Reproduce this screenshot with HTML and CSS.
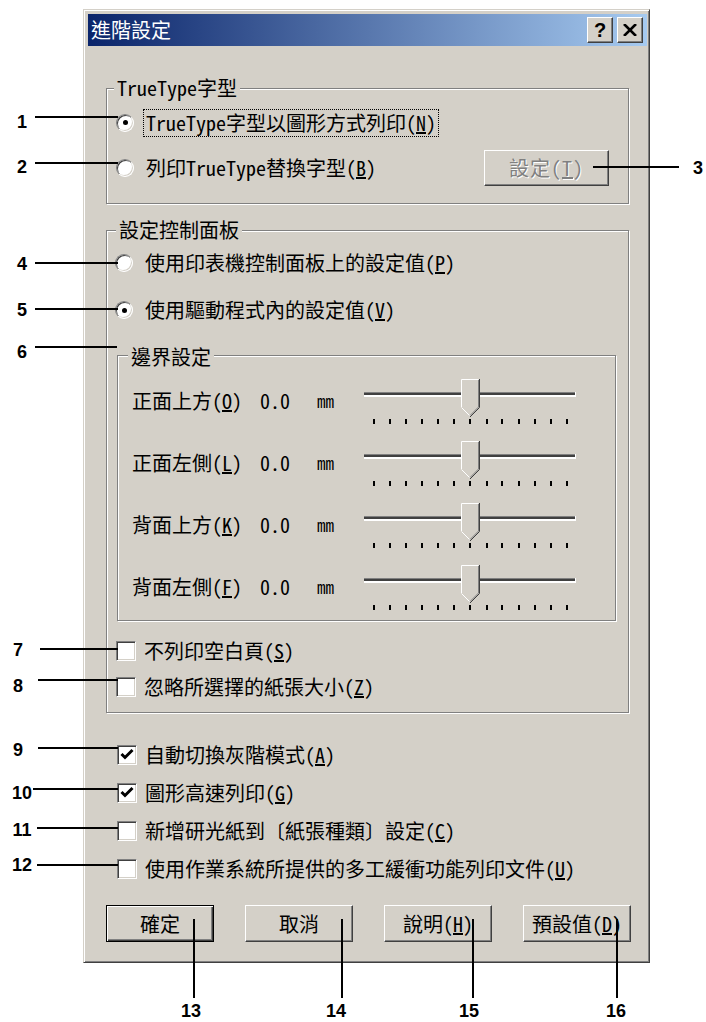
FILE: index.html
```html
<!DOCTYPE html>
<html lang="zh-Hant">
<head>
<meta charset="UTF-8">
<meta name="viewport" content="width=device-width, initial-scale=1.0">
<title>進階設定</title>
<link rel="stylesheet" href="styles.css">
</head>
<body>
<div id="page">

  <div class="dialog">
    <div class="titlebar">
      <span class="title">進階設定</span>
      <span class="tb-btn">?</span>
      <span class="tb-btn">
        <svg width="14" height="12" viewBox="0 0 14 12"><path d="M1 0 L13 12 M13 0 L1 12" stroke="#000" stroke-width="2.6"/></svg>
      </span>
    </div>

    <!-- TrueType 字型 -->
    <div class="group g-font">
      <div class="group-title">TrueType字型</div>
      <div class="row r45">
        <span class="radio on"></span>
        <span class="lbl focus">TrueType字型以圖形方式列印(<u>N</u>)</span>
      </div>
      <div class="row r45">
        <span class="radio"></span>
        <span class="lbl">列印TrueType替換字型(<u>B</u>)</span>
        <span class="btn disabled btn-set">設定(<u>T</u>)</span>
      </div>
    </div>

    <!-- 設定控制面板 -->
    <div class="group g-panel">
      <div class="group-title">設定控制面板</div>
      <div class="row r42">
        <span class="radio"></span>
        <span class="lbl">使用印表機控制面板上的設定值(<u>P</u>)</span>
      </div>
      <div class="row r42 gap5">
        <span class="radio on"></span>
        <span class="lbl">使用驅動程式內的設定值(<u>V</u>)</span>
      </div>

      <div class="group g-margin">
        <div class="group-title">邊界設定</div>
        <div class="row r62">
          <span class="m-label">正面上方(<u>O</u>)</span><span class="m-val">0.0</span><span class="m-unit">mm</span>
          <svg class="slider" width="214" height="62" viewBox="0 0 214 62"><use href="#trackbar"/></svg>
        </div>
        <div class="row r62">
          <span class="m-label">正面左側(<u>L</u>)</span><span class="m-val">0.0</span><span class="m-unit">mm</span>
          <svg class="slider" width="214" height="62" viewBox="0 0 214 62"><use href="#trackbar"/></svg>
        </div>
        <div class="row r62">
          <span class="m-label">背面上方(<u>K</u>)</span><span class="m-val">0.0</span><span class="m-unit">mm</span>
          <svg class="slider" width="214" height="62" viewBox="0 0 214 62"><use href="#trackbar"/></svg>
        </div>
        <div class="row r62">
          <span class="m-label">背面左側(<u>F</u>)</span><span class="m-val">0.0</span><span class="m-unit">mm</span>
          <svg class="slider" width="214" height="62" viewBox="0 0 214 62"><use href="#trackbar"/></svg>
        </div>
      </div>

      <div class="row r36 first-check">
        <span class="check"></span>
        <span class="lbl">不列印空白頁(<u>S</u>)</span>
      </div>
      <div class="row r36">
        <span class="check"></span>
        <span class="lbl">忽略所選擇的紙張大小(<u>Z</u>)</span>
      </div>
    </div>

    <!-- 其他選項 -->
    <div class="checks">
      <div class="row r38">
        <span class="check on"><svg width="16" height="16" viewBox="0 0 16 16"><path d="M2.5 7 L6 10.5 L13.5 3" fill="none" stroke="#000" stroke-width="3"/></svg></span>
        <span class="lbl">自動切換灰階模式(<u>A</u>)</span>
      </div>
      <div class="row r38">
        <span class="check on"><svg width="16" height="16" viewBox="0 0 16 16"><path d="M2.5 7 L6 10.5 L13.5 3" fill="none" stroke="#000" stroke-width="3"/></svg></span>
        <span class="lbl">圖形高速列印(<u>G</u>)</span>
      </div>
      <div class="row r38">
        <span class="check"></span>
        <span class="lbl">新增研光紙到〔紙張種類〕設定(<u>C</u>)</span>
      </div>
      <div class="row r38">
        <span class="check"></span>
        <span class="lbl">使用作業系統所提供的多工緩衝功能列印文件(<u>U</u>)</span>
      </div>
    </div>

    <div class="buttons">
      <span class="btn btn-default">確定</span>
      <span class="btn">取消</span>
      <span class="btn">說明(<u>H</u>)</span>
      <span class="btn">預設值(<u>D</u>)</span>
    </div>
  </div>

  <!-- callouts -->
  <span class="num n1">1</span><div class="hline l1"></div>
  <span class="num n2">2</span><div class="hline l2"></div>
  <span class="num n3">3</span><div class="hline l3"></div>
  <span class="num n4">4</span><div class="hline l4"></div>
  <span class="num n5">5</span><div class="hline l5"></div>
  <span class="num n6">6</span><div class="hline l6"></div>
  <span class="num n7">7</span><div class="hline l7"></div>
  <span class="num n8">8</span><div class="hline l8"></div>
  <span class="num n9">9</span><div class="hline l9"></div>
  <span class="num n10">10</span><div class="hline l10"></div>
  <span class="num n11">11</span><div class="hline l11"></div>
  <span class="num n12">12</span><div class="hline l12"></div>
  <span class="num bottom n13">13</span><div class="vline v13"></div>
  <span class="num bottom n14">14</span><div class="vline v14"></div>
  <span class="num bottom n15">15</span><div class="vline v15"></div>
  <span class="num bottom n16">16</span><div class="vline v16"></div>

  <!-- shared trackbar drawing -->
  <svg class="defs" width="0" height="0">
    <defs>
      <g id="trackbar">
        <rect x="0" y="23" width="212" height="1" fill="#808080"/>
        <rect x="0" y="24" width="211" height="2" fill="#404040"/>
        <rect x="211" y="23" width="1" height="5" fill="#fff"/>
        <rect x="0" y="26" width="212" height="2" fill="#fff"/>
        <path d="M97 10 H115 V38 L106 47 L97 38 Z" fill="#d4d0c8"/>
        <path d="M97.5 38 V10.5 H114.5" fill="none" stroke="#fff"/>
        <path d="M97.5 38.5 L106 47" fill="none" stroke="#fff"/>
        <path d="M115.5 10 V38.5 L106 48" fill="none" stroke="#404040"/>
        <path d="M114.5 11 V38 L106 46.5" fill="none" stroke="#808080"/>
        <g fill="#000">
          <rect x="9" y="50" width="2" height="5"/>
          <rect x="25" y="50" width="2" height="5"/>
          <rect x="41" y="50" width="2" height="5"/>
          <rect x="57" y="50" width="2" height="5"/>
          <rect x="73" y="50" width="2" height="5"/>
          <rect x="89" y="50" width="2" height="5"/>
          <rect x="105" y="50" width="2" height="5"/>
          <rect x="122" y="50" width="2" height="5"/>
          <rect x="137" y="50" width="2" height="5"/>
          <rect x="154" y="50" width="2" height="5"/>
          <rect x="170" y="50" width="2" height="5"/>
          <rect x="186" y="50" width="2" height="5"/>
          <rect x="202" y="50" width="2" height="5"/>
        </g>
      </g>
    </defs>
  </svg>
</div>
</body>
</html>
```

FILE: styles.css
```css
body {
  margin: 0;
  background: #fff;
  font-family: "Noto Sans Mono CJK TC", "Noto Sans CJK TC", sans-serif;
  font-size: 20px;
  color: #000;
}

#page {
  position: relative;
  width: 706px;
  height: 1022px;
  overflow: hidden;
}

.defs {
  position: absolute;
}

/* ventana clasica */
.dialog {
  box-sizing: border-box;
  width: 567px;
  height: 954px;
  margin: 9px 0 0 83px;
  padding: 4px 2px 2px 4px;
  background: #d4d0c8;
  border: 1px solid;
  border-color: #d4d0c8 #404040 #404040 #d4d0c8;
  box-shadow: inset 1px 1px 0 #fff, inset -1px -1px 0 #808080;
}

.titlebar {
  display: flex;
  align-items: center;
  height: 32px;
  padding: 0 4px 0 3px;
  background: linear-gradient(to right, #0a246a, #a6caf0);
  color: #fff;
}

.title {
  flex: 1;
  line-height: 32px;
}

.tb-btn {
  box-sizing: border-box;
  width: 26px;
  height: 26px;
  display: flex;
  align-items: center;
  justify-content: center;
  background: #d4d0c8;
  border: 1px solid;
  border-color: #fff #404040 #404040 #fff;
  box-shadow: inset -1px -1px 0 #808080;
  color: #000;
  font: bold 20px/1 "Liberation Sans", Arial, sans-serif;
}

.tb-btn + .tb-btn {
  margin-left: 4px;
}

/* grupos */
.group {
  border: 1px solid #808080;
  box-shadow: 1px 1px 0 #fff, inset 1px 1px 0 #fff;
}

.group-title {
  display: table;
  height: 24px;
  line-height: 24px;
  margin-top: -13px;
  padding: 0 3px;
  background: #d4d0c8;
}

.g-font {
  margin: 42px 18px 0;
  padding: 0 19px 13px 9px;
}

.g-font .group-title {
  margin-left: -2px;
}

.g-panel {
  margin: 26px 18px 0;
  padding: 0 12px 7px 8px;
}

.g-panel > .group-title {
  margin-left: 1px;
}

.g-margin {
  margin: 24px 0 0 2px;
  padding: 2px 0 3px 14px;
}

.g-margin .group-title {
  margin-left: -4px;
}

.row {
  display: flex;
  align-items: center;
  white-space: nowrap;
}

.r45 { height: 45px; }
.r42 { height: 42px; }
.r62 { height: 62px; }
.r36 { height: 36px; }
.r38 { height: 38px; }

.gap5 { margin-top: 5px; }
.first-check { margin-top: 12px; }

.lbl {
  margin-left: 12px;
  line-height: 24px;
}

.focus {
  margin-left: 9px;
  padding: 1px 2px;
  border: 1px dotted #000;
}

/* radio y checkbox */
.radio {
  box-sizing: border-box;
  width: 18px;
  height: 18px;
  border-radius: 50%;
  border: 1px solid;
  border-color: #808080 #fff #fff #808080;
  box-shadow: inset 1px 1px 0 #404040, inset -1px -1px 0 #d4d0c8;
  background: #fff;
  display: flex;
  align-items: center;
  justify-content: center;
  flex: none;
}

.radio.on::after {
  content: "";
  width: 5px;
  height: 5px;
  border-radius: 50%;
  background: #000;
}

.check {
  box-sizing: border-box;
  width: 20px;
  height: 20px;
  margin-left: 1px;
  border: 1px solid;
  border-color: #808080 #fff #fff #808080;
  box-shadow: inset 1px 1px 0 #404040, inset -1px -1px 0 #d4d0c8;
  background: #fff;
  display: flex;
  align-items: center;
  justify-content: center;
  flex: none;
}

.check + .lbl {
  margin-left: 8px;
}

.checks {
  margin: 23px 0 0 28px;
}

/* bordes (margenes) */
.m-label { width: 128px; }
.m-val { width: 57px; }
.m-unit { width: 47px; font-size: 17px; }

.slider {
  flex: none;
}

/* botones */
.btn {
  box-sizing: border-box;
  display: flex;
  align-items: center;
  justify-content: center;
  width: 108px;
  height: 37px;
  white-space: nowrap;
  background: #d4d0c8;
  border: 1px solid;
  border-color: #fff #404040 #404040 #fff;
  box-shadow: inset -1px -1px 0 #808080;
}

.btn-default {
  border-color: #000;
  box-shadow: inset 1px 1px 0 #fff, inset -1px -1px 0 #404040, inset -2px -2px 0 #808080;
}

.btn-set {
  width: 125px;
  height: 36px;
  margin-left: auto;
  letter-spacing: 1px;
}

.disabled {
  color: #808080;
  text-shadow: 1px 1px 0 #fff;
}

.buttons {
  display: flex;
  gap: 31px;
  margin: 17px 0 0 18px;
}

/* numeros de referencia */
.num {
  position: absolute;
  width: 30px;
  text-align: center;
  font: bold 18px/20px "Liberation Sans", Arial, sans-serif;
}

.num.bottom {
  top: 1001px;
}

.hline {
  position: absolute;
  height: 2px;
  background: #000;
}

.vline {
  position: absolute;
  width: 2px;
  top: 919px;
  height: 79px;
  background: #000;
}

.n1 { left: 7px; top: 112px; }
.n2 { left: 7px; top: 157px; }
.n3 { left: 683px; top: 158px; }
.n4 { left: 7px; top: 254px; }
.n5 { left: 7px; top: 300px; }
.n6 { left: 7px; top: 342px; }
.n7 { left: 3px; top: 640px; }
.n8 { left: 3px; top: 676px; }
.n9 { left: 3px; top: 740px; }
.n10 { left: 7px; top: 783px; }
.n11 { left: 7px; top: 820px; }
.n12 { left: 7px; top: 855px; }
.n13 { left: 176px; }
.n14 { left: 321px; }
.n15 { left: 454px; }
.n16 { left: 601px; }

.l1 { left: 35px; top: 116px; width: 83px; }
.l2 { left: 35px; top: 162px; width: 83px; }
.l3 { left: 593px; top: 166px; width: 86px; }
.l4 { left: 35px; top: 262px; width: 83px; }
.l5 { left: 35px; top: 308px; width: 83px; }
.l6 { left: 35px; top: 346px; width: 82px; }
.l7 { left: 40px; top: 648px; width: 78px; }
.l8 { left: 38px; top: 679px; width: 80px; }
.l9 { left: 38px; top: 747px; width: 80px; }
.l10 { left: 33px; top: 788px; width: 85px; }
.l11 { left: 37px; top: 827px; width: 81px; }
.l12 { left: 37px; top: 864px; width: 81px; }

.v13 { left: 193px; }
.v14 { left: 341px; }
.v15 { left: 472px; }
.v16 { left: 616px; }
```
